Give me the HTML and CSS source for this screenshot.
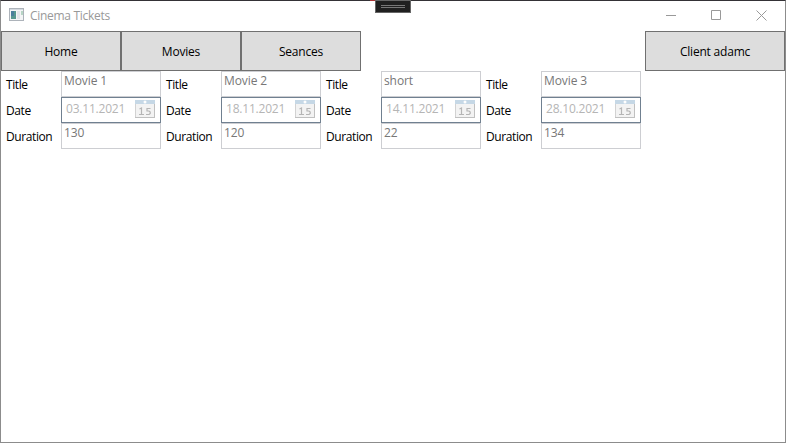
FILE: index.html
```html
<!DOCTYPE html>
<html lang="en">
<head>
<meta charset="utf-8">
<title>Cinema Tickets</title>
<link rel="stylesheet" href="styles.css">
</head>
<body>
<svg width="0" height="0" class="defs">
  <symbol id="calendar" viewBox="0 0 20 19">
    <rect x=".5" y=".5" width="19" height="17" fill="#f3f3f3" stroke="#d2d2d2"/>
    <rect x="0" y="0" width="20" height="4" fill="#c6d8e6"/>
    <circle cx="10" cy="2" r="1.5" fill="#fff"/>
    <path d="M0 17.5H20M19.5 4V18" stroke="#c0c0c0" fill="none"/>
    <path d="M4.5 9L6.5 8V14.5M4 14.5H9M15.5 8.5H12V11H14L15.2 12V13.5L14.2 14.5H11" stroke="#b5b5b5" stroke-width="1.2" fill="none"/>
  </symbol>
</svg>
<div class="window">
  <header class="titlebar">
    <svg class="app-icon" width="16" height="14" viewBox="0 0 16 14">
      <rect x=".5" y=".5" width="14" height="12" fill="#f4f5f6" stroke="#adb3ba"/>
      <path d="M1 1.5H14" stroke="#d5dae0"/>
      <rect x="2" y="3" width="5" height="8" fill="#57988f"/>
      <path d="M2 3H5V8H2Z" fill="#4b7f9c"/>
      <rect x="8" y="3" width="3" height="8" fill="#e3e5e8"/>
      <rect x="12" y="3" width="2" height="4" fill="#b7d5c5"/>
    </svg>
    <h1>Cinema Tickets</h1>
    <div class="controls">
      <svg width="11" height="11" viewBox="0 0 11 11"><path d="M0 5.5H10"/></svg>
      <svg width="11" height="11" viewBox="0 0 11 11"><path d="M.5 .5H9.5V9.5H.5Z"/></svg>
      <svg width="11" height="11" viewBox="0 0 11 11"><path d="M.5 .5L10.5 10.5M10.5 .5L.5 10.5"/></svg>
    </div>
  </header>
  <nav class="nav">
    <button>Home</button><button>Movies</button><button>Seances</button>
    <button class="client">Client adamc</button>
  </nav>
  <main class="cards">
    <section class="card">
      <label>Title</label><div class="field">Movie 1</div>
      <label>Date</label><div class="field date"><span>03.11.2021</span><svg width="20" height="19"><use href="#calendar"/></svg></div>
      <label>Duration</label><div class="field">130</div>
    </section>
    <section class="card">
      <label>Title</label><div class="field">Movie 2</div>
      <label>Date</label><div class="field date"><span>18.11.2021</span><svg width="20" height="19"><use href="#calendar"/></svg></div>
      <label>Duration</label><div class="field">120</div>
    </section>
    <section class="card">
      <label>Title</label><div class="field">short</div>
      <label>Date</label><div class="field date"><span>14.11.2021</span><svg width="20" height="19"><use href="#calendar"/></svg></div>
      <label>Duration</label><div class="field">22</div>
    </section>
    <section class="card">
      <label>Title</label><div class="field">Movie 3</div>
      <label>Date</label><div class="field date"><span>28.10.2021</span><svg width="20" height="19"><use href="#calendar"/></svg></div>
      <label>Duration</label><div class="field">134</div>
    </section>
  </main>
  <div class="debug-handle"><i></i><i></i></div>
</div>
</body>
</html>
```
FILE: styles.css
```css
* { box-sizing: border-box; }
body { margin: 0; background: #fff; font: 12px/16px "Open Sans", "Noto Sans", sans-serif; color: #000; overflow: hidden; }
.defs { position: absolute; }
.window { position: relative; height: 443px; border: 1px solid #8c8c8c; border-top-color: #343236; }
.titlebar { display: flex; align-items: center; height: 30px; padding: 0 17px 0 8px; }
.app-icon { margin: 0 5px 2px 0; }
h1 { margin: 0; font-size: 12px; line-height: 16px; font-weight: 400; color: #999; letter-spacing: -.3px; }
.controls { display: flex; gap: 34px; margin: 0 1px 2px auto; }
.controls svg { display: block; fill: none; stroke: #999; }
.nav { display: flex; height: 40px; }
.nav button { width: 120px; height: 40px; padding: 2px 0 0; border: 1px solid #707070; border-radius: 0; background: #ddd; color: #000; font: inherit; letter-spacing: -.2px; }
.nav .client { width: 140px; margin-left: auto; }
.cards { display: flex; }
.card { display: grid; grid-template-columns: 60px 100px; grid-auto-rows: 26px; }
label { padding: 6px 0 0 5px; letter-spacing: -.4px; }
.field { border: 1px solid #cdced2; padding: 1px 2px; color: #777; letter-spacing: -.1px; }
.date { display: flex; align-items: center; justify-content: space-between; padding: 0 5px 0 4px; border-color: #708090; color: #b5b5b5; }
.date span { margin-bottom: 2px; letter-spacing: -.2px; }
.date svg { margin-bottom: 1px; }
.debug-handle { position: absolute; left: 374px; top: -1px; width: 36px; height: 13px; padding-top: 4px; border: 1px solid #666; background: #202020; }
.debug-handle i { display: block; width: 24px; height: 1px; margin: 0 auto 1px; background: #777; }
.debug-handle::before { content: ""; position: absolute; left: -6px; top: -1px; width: 5px; height: 1px; background: #a33; }
```
